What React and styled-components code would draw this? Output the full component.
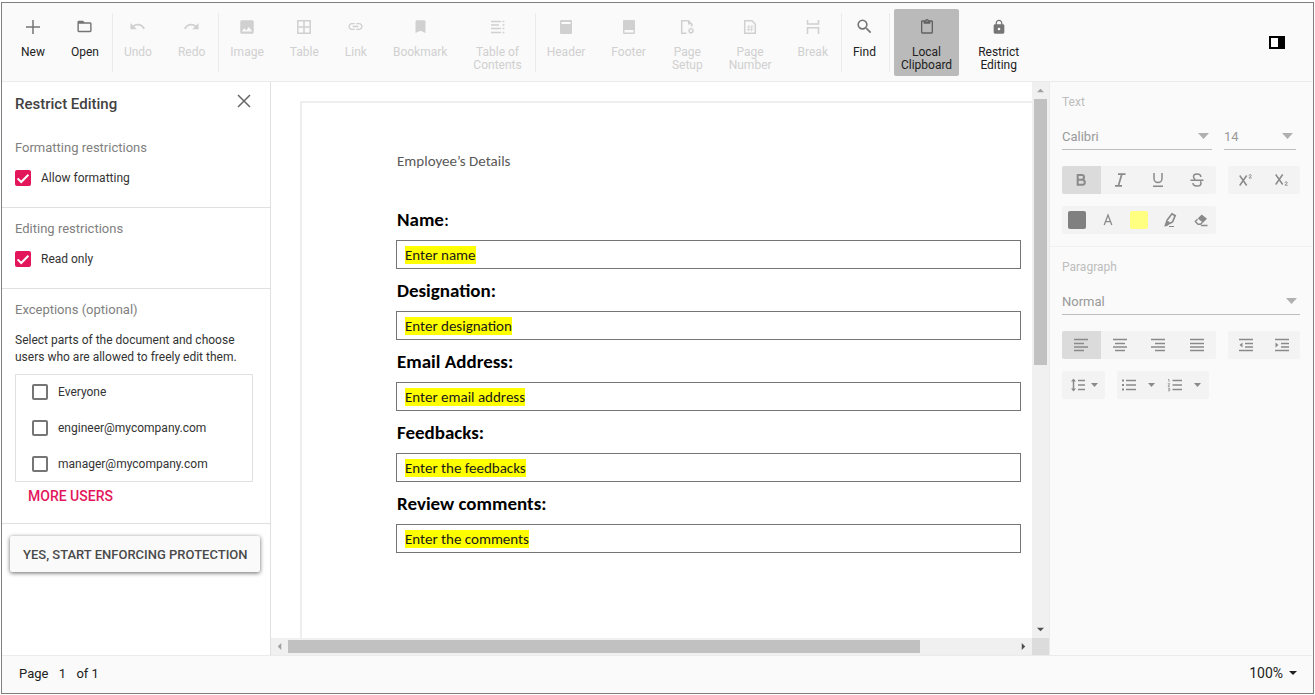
import React, { useState } from 'react'
import styled, { createGlobalStyle } from 'styled-components'
import { MdFolderOpen, MdUndo, MdRedo, MdImage, MdLink, MdBookmark, MdSearch, MdContentPaste, MdLock } from 'react-icons/md'

const GlobalStyle = createGlobalStyle`
  * {
    box-sizing: border-box;
  }
  body {
    margin: 0;
    background-color: #ffffff;
    font-family: Roboto, 'Liberation Sans', sans-serif;
  }
  button, input, select {
    font-family: inherit;
    margin: 0;
  }
`
const Page = styled.div`
  display: flex;
  height: 100vh;
  min-height: 640px;
  padding: 2px 1px 1px 1px;
`
const Frame = styled.div`
  display: flex;
  flex-direction: column;
  flex: 1;
  min-width: 0;
  padding-right: 1px;
  border: 1px solid #7f7f7f;
  background-color: #fafafa;
`
const Toolbar = styled.header`
  display: flex;
  align-items: center;
  justify-content: space-between;
  height: 79px;
  padding: 0 23px 0 6px;
  border-bottom: 1px solid #ebebeb;
`
const Tools = styled.div`
  display: flex;
  align-items: center;
`
const ToolGroup = styled.div`
  display: flex;
  height: 59px;
  align-items: center;
  margin-right: -2px;
  border-right: ${props => props.$last ? 'none' : '1px solid #ebebeb'};
`
const ToolButton = styled.button`
  display: flex;
  flex-direction: column;
  align-items: center;
  gap: 11px;
  height: 67px;
  margin: 0 6px;
  padding: 10px 7px 0;
  border: none;
  border-radius: 2px;
  background-color: ${props => props.$active ? '#bababa' : 'transparent'};
  color: #212121;
  font-size: 12px;
  line-height: 13px;
  text-align: center;
  svg {
    color: ${props => props.$active ? '#616161' : '#757575'};
  }
  &:disabled, &:disabled svg {
    color: #d0d0d0;
  }
`
const IconBox = styled.span`
  display: flex;
  align-items: center;
  justify-content: center;
  height: 16px;
`
const Line = styled.span`
  display: block;
`
const PaneToggle = styled.button`
  display: flex;
  padding: 4px;
  border: none;
  background: none;
  color: #000000;
`
const Main = styled.main`
  display: flex;
  flex: 1;
  min-height: 0;
`
const RestrictPane = styled.aside`
  width: 269px;
  flex-shrink: 0;
  background-color: #ffffff;
  border-right: 1px solid #e0e0e0;
`
const PaneHeader = styled.div`
  display: flex;
  justify-content: space-between;
  align-items: flex-start;
  padding: 12px 18px 0 13px;
  height: 45px;
`
const PaneTitle = styled.h2`
  margin: 0;
  color: #424242;
  font-size: 15px;
  line-height: 20px;
  font-weight: 500;
`
const CloseButton = styled.button`
  display: flex;
  padding: 0;
  border: none;
  background: none;
  color: #666666;
`
const Section = styled.section`
  padding: 11px 13px 0;
  height: ${props => props.$height};
  border-bottom: 1px solid #e0e0e0;
`
const SectionTitle = styled.h3`
  margin: 0 0 12px;
  color: #808080;
  font-size: 13px;
  line-height: 20px;
  font-weight: 400;
`
const CheckLabel = styled.label`
  display: flex;
  align-items: center;
  gap: 10px;
  height: 16px;
  color: #333333;
  font-size: 12px;
`
const CheckBox = styled.input`
  appearance: none;
  width: 16px;
  height: 16px;
  border: 2px solid #757575;
  border-radius: 2px;
  background-color: #ffffff;
  &:checked {
    border: none;
    background: #e3165b url("data:image/svg+xml,%3Csvg xmlns='http://www.w3.org/2000/svg' viewBox='0 0 16 16'%3E%3Cpath d='M2.6 8.4l3.6 3.6 7.2-7.2' fill='none' stroke='white' stroke-width='2'/%3E%3C/svg%3E");
  }
`
const Hint = styled.p`
  margin: 0 0 8px;
  color: #333333;
  font-size: 12px;
  line-height: 17px;
`
const UserList = styled.div`
  display: flex;
  flex-direction: column;
  gap: 20px;
  margin-right: 4px;
  padding: 9px 16px;
  border: 1px solid #e0e0e0;
`
const MoreUsers = styled.button`
  display: block;
  margin-left: 13px;
  padding: 0;
  border: none;
  background: none;
  color: #e3165b;
  font-size: 14px;
  line-height: 28px;
  font-weight: 500;
`
const EnforceButton = styled.button`
  display: block;
  height: 36px;
  margin: 12px 8px 0;
  padding: 0 12px 0 13px;
  border: none;
  border-radius: 2px;
  background-color: #fafafa;
  box-shadow: 0 1px 4px rgba(0, 0, 0, 0.6);
  color: #4a4a4a;
  font-size: 13px;
  font-weight: 500;
  white-space: nowrap;
`
const Viewer = styled.section`
  display: grid;
  grid-template-columns: minmax(0, 1fr) 17px;
  grid-template-rows: minmax(0, 1fr) 17px;
  flex: 1;
  min-width: 0;
`
const Canvas = styled.div`
  overflow: hidden;
  padding: 19px 0 0 29px;
  background-color: #ffffff;
`
const Sheet = styled.article`
  width: 816px;
  height: 1056px;
  padding: 46px 93px 46px 94px;
  border: 2px solid #eeeeee;
  color: #000000;
  font-family: Calibri, Carlito, Lato, sans-serif;
`
const DocHeader = styled.p`
  margin: 0 0 33px;
  padding-left: 1px;
  color: #595959;
  font-size: 15px;
  line-height: 24px;
`
const Field = styled.div`
  margin-bottom: 8px;
`
const FieldLabel = styled.label`
  display: block;
  padding: 0 0 7px 1px;
  font-size: 19px;
  line-height: 27px;
  font-weight: 700;
`
const Plain = styled.span`
  font-weight: 400;
`
const FieldBox = styled.div`
  display: flex;
  align-items: center;
  height: 29px;
  padding-left: 8px;
  border: 1px solid #757575;
`
const FieldInput = styled.input`
  field-sizing: content;
  height: 18px;
  padding: 0;
  border: none;
  background-color: #ffff00;
  color: #1a1a1a;
  font-size: 15px;
`
const ScrollTrack = styled.div`
  display: flex;
  flex-direction: ${props => props.$vertical ? 'column' : 'row'};
  align-items: center;
  background-color: #f0f0f0;
`
const ScrollArrow = styled.span`
  display: flex;
  align-items: center;
  justify-content: center;
  width: 17px;
  height: 17px;
  color: ${props => props.$dim ? '#a0a0a0' : '#505050'};
`
const ScrollSpace = styled.div`
  display: flex;
  flex: 1;
  flex-direction: ${props => props.$vertical ? 'column' : 'row'};
`
const ScrollThumb = styled.div`
  width: ${props => props.$vertical ? '13px' : '87%'};
  height: ${props => props.$vertical ? '51%' : '13px'};
  background-color: #c1c1c1;
`
const ScrollCorner = styled.div`
  background-color: #dcdcdc;
`
const PropertiesPane = styled.aside`
  width: 263px;
  flex-shrink: 0;
  border-left: 1px solid #ebebeb;
`
const PropertyGroup = styled.section`
  display: flex;
  flex-direction: column;
  gap: 12px;
  padding: 11px 12px 12px;
  border-bottom: ${props => props.$last ? 'none' : '1px solid #f0f0f0'};
`
const PropertyTitle = styled.h3`
  margin: 0;
  color: #bdbdbd;
  font-size: 12px;
  line-height: 18px;
  font-weight: 400;
`
const Row = styled.div`
  display: flex;
  gap: 12px;
`
const SelectWrap = styled.label`
  display: grid;
  align-items: center;
  width: ${props => props.$width || '100%'};
  height: 27px;
  margin-bottom: 4px;
  border-bottom: 1px solid #bdbdbd;
  color: #b0b0b0;
  > * {
    grid-area: 1 / 1;
  }
  svg {
    justify-self: end;
    margin-right: 3px;
    pointer-events: none;
  }
`
const Select = styled.select`
  appearance: none;
  width: 100%;
  padding: 0;
  border: none;
  background: none;
  color: #999999;
  opacity: 1;
  font-size: 13px;
`
const ButtonStrip = styled.div`
  display: flex;
  width: ${props => props.$width};
  border-radius: 2px;
  overflow: hidden;
  background-color: #f3f3f3;
`
const StripButton = styled.button`
  display: flex;
  flex: 1;
  align-items: center;
  justify-content: center;
  gap: 5px;
  height: 28px;
  padding: 0;
  border: none;
  background-color: ${props => props.$active ? '#dbdbdb' : 'transparent'};
  color: #8a8a8a;
`
const Swatch = styled.span`
  width: 18px;
  height: 18px;
  border-radius: 2px;
  background-color: ${props => props.$color};
`
const StatusBar = styled.footer`
  display: flex;
  align-items: center;
  justify-content: space-between;
  height: 38px;
  padding: 0 15px 3px 17px;
  border-top: 1px solid #ebebeb;
  color: #212121;
  font-size: 13px;
`
const PageInfo = styled.label`
  display: flex;
  align-items: center;
`
const PageInput = styled.input`
  width: 28px;
  padding: 0;
  border: none;
  background: none;
  color: inherit;
  font-size: 13px;
  text-align: center;
`
const ZoomButton = styled.button`
  display: flex;
  align-items: center;
  gap: 6px;
  padding: 0;
  border: none;
  background: none;
  color: #212121;
  font-size: 14px;
`

const Glyph = ({ size = 16, box = 16, children }) => (
  <svg width={size} height={size} viewBox={`0 0 ${box} ${box}`} fill='none' stroke='currentColor' aria-hidden='true'>
    {children}
  </svg>
)

const Caret = ({ width = 7, height = 4 }) => (
  <svg width={width} height={height} viewBox='0 0 10 5' preserveAspectRatio='none' fill='currentColor' aria-hidden='true'>
    <path d='M0 0h10L5 5z' />
  </svg>
)

const icons = {
  plus: <Glyph><path d='M8 1v14M1 8h14' strokeWidth='1.5' /></Glyph>,
  table: <Glyph><path d='M1.8 1.8h12.4v12.4H1.8zM8 2v12M2 8h12' strokeWidth='1.5' /></Glyph>,
  toc: <Glyph><path d='M1 2.5h10M1 6h8M1 9.5h10M1 13.5h10' strokeWidth='1.5' /><path d='M12.5 2.5H15M12.5 6H15M12.5 9.5H15M12.5 13.5H15' strokeWidth='1.3' strokeDasharray='1.5 .6' /></Glyph>,
  header: <Glyph><path d='M3 1h10a1 1 0 0 1 1 1v12a1 1 0 0 1-1 1H3a1 1 0 0 1-1-1V2a1 1 0 0 1 1-1zM3.5 3v2h9V3z' fill='currentColor' fillRule='evenodd' stroke='none' /></Glyph>,
  footer: <Glyph><path d='M3 1h10a1 1 0 0 1 1 1v12a1 1 0 0 1-1 1H3a1 1 0 0 1-1-1V2a1 1 0 0 1 1-1zM3.5 11v2.5h9V11z' fill='currentColor' fillRule='evenodd' stroke='none' /></Glyph>,
  setup: <Glyph><path d='M7.5 14.2H2.7V1.8h6.8l3.3 3.4v2.3' strokeWidth='1.5' /><path d='M9 1.5v4h4z' fill='currentColor' stroke='none' /><circle cx='12' cy='11.8' r='1.9' strokeWidth='1.3' /><path d='M12 8.6v1M12 14v1M8.9 11.8h1M14.2 11.8h1M9.8 9.6l.7.7M13.5 13.3l.7.7M14.2 9.6l-.7.7M10.5 13.3l-.7.7' /></Glyph>,
  number: <Glyph><path d='M2.7 1.8h7.3l3.3 3.4v9H2.7z' strokeWidth='1.5' /><path d='M7 6l-.7 6.5M10 6l-.7 6.5M4.8 8h6.6M4.6 10.5h6.6' strokeWidth='.8' /></Glyph>,
  break: <Glyph><path d='M2.5 1v4h11V1M2.5 15V8.7h11V15' strokeWidth='1.6' /></Glyph>,
  close: <Glyph><path d='M2 1l12 12M14 1L2 13' strokeWidth='1.5' /></Glyph>,
  bold: <Glyph><path d='M4.7 3h4a2.3 2.3 0 0 1 0 4.7h-4zM4.7 7.7h4.6a2.5 2.5 0 0 1 0 5H4.7z' strokeWidth='2' /></Glyph>,
  italic: <Glyph><path d='M6 2.2h7.5M3 13.8h7M9.8 2.2L6.4 13.8' strokeWidth='1.7' /></Glyph>,
  underline: <Glyph><path d='M4 1v5.6a4 4 0 0 0 8 0V1M3 14.3h10' strokeWidth='1.5' /></Glyph>,
  strike: <Glyph><path d='M1.5 8.2h13M11.8 5c0-2-1.6-3-3.7-3S4.5 3 4.5 4.7c0 1.2.6 2 1.7 2.6M4 11c0 2 1.7 3 4 3s4-1 4-2.8c0-.8-.3-1.4-.8-1.8' strokeWidth='1.5' /></Glyph>,
  superscript: <Glyph><path d='M1.7 3.5l7 10M8.7 3.5l-7 10' strokeWidth='1.5' /><path d='M11 3.700c0-1.500 2.300-1.500 2.300 0 0 .9-2.300 1.100-2.300 2.300h2.700' strokeWidth='.9' /></Glyph>,
  subscript: <Glyph><path d='M1.700 2.500l7 10M8.700 2.500l-7 10' strokeWidth='1.500' /><path d='M11 10.900c0-1.500 2.300-1.500 2.300 0 0 .9-2.300 1.100-2.300 2.300h2.700' strokeWidth='.9' /></Glyph>,
  fontColor: <Glyph><path d='M4.200 13L8 3l3.800 10M5.500 9.700h5' strokeWidth='1.300' /></Glyph>,
  highlighter: <Glyph><path d='M5.200 8L10 1.800l3.200 1.900-2.700 6.300-3 1.500' strokeWidth='1.700' /><path d='M4.500 7.500l4.200 3.700-3.500 2.800-3 .5z' fill='currentColor' stroke='none' /><path d='M7 14.500h5' /></Glyph>,
  eraser: <Glyph><path d='M8.700 2.500l5.300 4.300-4 4-5.300-4.300z' fill='currentColor' stroke='none' /><path d='M4.500 7.200L2.300 9.500l2.700 2.800h2.500l2-2' strokeWidth='1.400' /><path d='M8 13.500h6.500' strokeWidth='1.300' /></Glyph>,
  left: <Glyph><path d='M1 2.500h14M1 6.500h10M1 10h14M1 13.500h10' strokeWidth='1.500' /></Glyph>,
  center: <Glyph><path d='M1 2.500h14M3 6.500h10M1 10h14M3 13.500h10' strokeWidth='1.500' /></Glyph>,
  right: <Glyph><path d='M1 2.500h14M5 6.500h10M1 10h14M5 13.500h10' strokeWidth='1.500' /></Glyph>,
  justify: <Glyph><path d='M1 2.500h14M1 6.500h14M1 10h14M1 13.500h14' strokeWidth='1.500' /></Glyph>,
  outdent: <Glyph><path d='M1 2.500h14M7 6.500h8M7 10h8M1 13.500h14' strokeWidth='1.500' /><path d='M4.500 5.500v5L1.500 8z' fill='currentColor' stroke='none' /></Glyph>,
  indent: <Glyph><path d='M1 2.500h14M7 6.500h8M7 10h8M1 13.500h14' strokeWidth='1.500' /><path d='M1.500 5.500v5l3-2.500z' fill='currentColor' stroke='none' /></Glyph>,
  spacing: <Glyph><path d='M8 3.500h7M8 8h7M8 12.500h7M3.500 3v10' strokeWidth='1.500' /><path d='M1 4.500L3.500 1.500 6 4.500zM1 11.500l2.500 3 2.500-3z' fill='currentColor' stroke='none' /></Glyph>,
  bullets: <Glyph><path d='M5 3.500h10M5 8h10M5 12.500h10' strokeWidth='1.500' /><path d='M1 3.500h2M1 8h2M1 12.500h2' strokeWidth='2' /></Glyph>,
  numbers: <Glyph><path d='M5.500 3.500H15M5.500 8H15M5.500 12.500H15' strokeWidth='1.500' /><path d='M1 2.500h1v2.500M.8 6.700h1.900L1 9.300h2M1 11.200h1.700v2.600H1M1.500 12.500h1' strokeWidth='.8' /></Glyph>,
}

const toolGroups = [
  [
    { lines: ['New'], icon: icons.plus },
    { lines: ['Open'], icon: <MdFolderOpen size={17} /> },
  ],
  [
    { lines: ['Undo'], icon: <MdUndo size={17} />, disabled: true },
    { lines: ['Redo'], icon: <MdRedo size={17} />, disabled: true },
  ],
  [
    { lines: ['Image'], icon: <MdImage size={18} />, disabled: true },
    { lines: ['Table'], icon: icons.table, disabled: true },
    { lines: ['Link'], icon: <MdLink size={17} />, disabled: true },
    { lines: ['Bookmark'], icon: <MdBookmark size={17} />, disabled: true },
    { lines: ['Table of', 'Contents'], icon: icons.toc, disabled: true },
  ],
  [
    { lines: ['Header'], icon: icons.header, disabled: true },
    { lines: ['Footer'], icon: icons.footer, disabled: true },
    { lines: ['Page', 'Setup'], icon: icons.setup, disabled: true },
    { lines: ['Page', 'Number'], icon: icons.number, disabled: true },
    { lines: ['Break'], icon: icons.break, disabled: true },
  ],
  [
    { lines: ['Find'], icon: <MdSearch size={19} /> },
  ],
  [
    { lines: ['Local', 'Clipboard'], icon: <MdContentPaste size={16} />, active: true },
    { lines: ['Restrict', 'Editing'], icon: <MdLock size={16} /> },
  ],
]

const fields = [
  { id: 'name', label: <>Name<Plain>:</Plain></>, value: 'Enter name' },
  { id: 'designation', label: 'Designation:', value: 'Enter designation' },
  { id: 'email', label: 'Email Address:', value: 'Enter email address' },
  { id: 'feedbacks', label: 'Feedbacks:', value: 'Enter the feedbacks' },
  { id: 'comments', label: 'Review comments:', value: 'Enter the comments' },
]

const users = ['Everyone', 'engineer@mycompany.com', 'manager@mycompany.com']

const Check = ({ label, checked = false }) => {
  const [on, setOn] = useState(checked)
  return (
    <CheckLabel>
      <CheckBox type='checkbox' checked={on} onChange={() => setOn(!on)} />
      {label}
    </CheckLabel>
  )
}

const Dropdown = ({ name, value, width }) => (
  <SelectWrap $width={width}>
    <Select aria-label={name} disabled defaultValue={value}>
      <option>{value}</option>
    </Select>
    <Caret width={11} height={6} />
  </SelectWrap>
)

const Strip = ({ width, items }) => (
  <ButtonStrip $width={width}>
    {items.map(([name, icon, active]) => (
      <StripButton key={name} aria-label={name} $active={active} disabled>{icon}</StripButton>
    ))}
  </ButtonStrip>
)

const RestrictEditing = () => (
  <RestrictPane>
    <PaneHeader>
      <PaneTitle>Restrict Editing</PaneTitle>
      <CloseButton aria-label='Close'>{icons.close}</CloseButton>
    </PaneHeader>
    <Section $height='81px'>
      <SectionTitle>Formatting restrictions</SectionTitle>
      <Check label='Allow formatting' checked />
    </Section>
    <Section $height='81px'>
      <SectionTitle>Editing restrictions</SectionTitle>
      <Check label='Read only' checked />
    </Section>
    <Section $height='235px'>
      <SectionTitle>Exceptions (optional)</SectionTitle>
      <Hint>Select parts of the document and choose users who are allowed to freely edit them.</Hint>
      <UserList>
        {users.map(user => <Check key={user} label={user} />)}
      </UserList>
      <MoreUsers>MORE USERS</MoreUsers>
    </Section>
    <EnforceButton>YES, START ENFORCING PROTECTION</EnforceButton>
  </RestrictPane>
)

const DocumentView = () => (
  <Viewer>
    <Canvas>
      <Sheet>
        <DocHeader>Employee’s Details</DocHeader>
        {fields.map(field => (
          <Field key={field.id}>
            <FieldLabel htmlFor={field.id}>{field.label}</FieldLabel>
            <FieldBox>
              <FieldInput id={field.id} defaultValue={field.value} />
            </FieldBox>
          </Field>
        ))}
      </Sheet>
    </Canvas>
    <ScrollTrack $vertical>
      <ScrollArrow $dim><Glyph size={7} box={8}><path d='M0 6h8L4 2z' fill='currentColor' stroke='none' /></Glyph></ScrollArrow>
      <ScrollSpace $vertical><ScrollThumb $vertical /></ScrollSpace>
      <ScrollArrow><Glyph size={7} box={8}><path d='M0 2h8L4 6z' fill='currentColor' stroke='none' /></Glyph></ScrollArrow>
    </ScrollTrack>
    <ScrollTrack>
      <ScrollArrow $dim><Glyph size={7} box={8}><path d='M6 0v8L2 4z' fill='currentColor' stroke='none' /></Glyph></ScrollArrow>
      <ScrollSpace><ScrollThumb /></ScrollSpace>
      <ScrollArrow><Glyph size={7} box={8}><path d='M2 0v8l4-4z' fill='currentColor' stroke='none' /></Glyph></ScrollArrow>
    </ScrollTrack>
    <ScrollCorner />
  </Viewer>
)

const Properties = () => (
  <PropertiesPane>
    <PropertyGroup>
      <PropertyTitle>Text</PropertyTitle>
      <Row>
        <Dropdown name='Font family' value='Calibri' width='150px' />
        <Dropdown name='Font size' value='14' width='72px' />
      </Row>
      <Row>
        <Strip width='154px' items={[['Bold', icons.bold, true], ['Italic', icons.italic], ['Underline', icons.underline], ['Strikethrough', icons.strike]]} />
        <Strip width='72px' items={[['Superscript', icons.superscript], ['Subscript', icons.subscript]]} />
      </Row>
      <Row>
        <Strip
          width='154px'
          items={[
            ['Font color', <Swatch $color='#808080' />],
            ['Pick font color', icons.fontColor],
            ['Highlight color', <Swatch $color='#ffff80' />],
            ['Highlight', icons.highlighter],
            ['Clear formatting', icons.eraser],
          ]}
        />
      </Row>
    </PropertyGroup>
    <PropertyGroup $last>
      <PropertyTitle>Paragraph</PropertyTitle>
      <Dropdown name='Style' value='Normal' />
      <Row>
        <Strip width='154px' items={[['Align left', icons.left, true], ['Align center', icons.center], ['Align right', icons.right], ['Justify', icons.justify]]} />
        <Strip width='72px' items={[['Decrease indent', icons.outdent], ['Increase indent', icons.indent]]} />
      </Row>
      <Row>
        <Strip width='43px' items={[['Line spacing', <>{icons.spacing}<Caret /></>]]} />
        <Strip width='92px' items={[['Bullets', icons.bullets], ['Bullet styles', <Caret />], ['Numbering', icons.numbers], ['Numbering styles', <Caret />]]} />
      </Row>
    </PropertyGroup>
  </PropertiesPane>
)

const App = () => {
  return (
    <Page>
      <GlobalStyle />
      <Frame>
        <Toolbar>
          <Tools>
            {toolGroups.map((group, index) => (
              <ToolGroup key={index} $last={index === toolGroups.length - 1}>
                {group.map(tool => (
                  <ToolButton key={tool.lines.join(' ')} disabled={tool.disabled} $active={tool.active}>
                    <IconBox>{tool.icon}</IconBox>
                    <span>{tool.lines.map(line => <Line key={line}>{line}</Line>)}</span>
                  </ToolButton>
                ))}
              </ToolGroup>
            ))}
          </Tools>
          <PaneToggle aria-label='Toggle properties pane'>
            <Glyph><path d='M1 3h14v11H1z' fill='#ffffff' strokeWidth='2' /><path d='M9 2.500h6v12H9z' fill='currentColor' stroke='none' /></Glyph>
          </PaneToggle>
        </Toolbar>
        <Main>
          <RestrictEditing />
          <DocumentView />
          <Properties />
        </Main>
        <StatusBar>
          <PageInfo>
            Page
            <PageInput defaultValue='1' aria-label='Current page' />
            of 1
          </PageInfo>
          <ZoomButton>100% <Caret width={8} /></ZoomButton>
        </StatusBar>
      </Frame>
    </Page>
  )
}

export default App
